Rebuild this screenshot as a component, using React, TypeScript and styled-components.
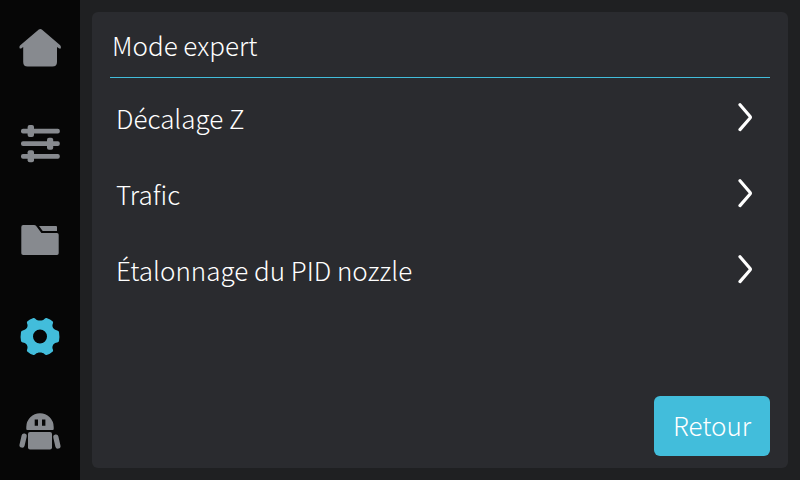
import React from "react";
import styled, { createGlobalStyle } from "styled-components";

const GlobalStyle = createGlobalStyle`
  *, *::before, *::after { box-sizing: border-box; }
  body {
    margin: 0;
    background: #1f2022;
    color: #ffffff;
    font-family: "Noto Sans CJK SC", "Noto Sans", sans-serif;
    font-weight: 300;
  }
  button { font: inherit; color: inherit; border: 0; cursor: pointer; }
`;

const Screen = styled.div`
  display: flex;
  min-height: 100vh;
`;

const Sidebar = styled.nav`
  display: grid;
  grid-auto-rows: 1fr;
  flex: 0 0 80px;
  background: #060606;
`;

const NavButton = styled.button<{ $active?: boolean }>`
  display: grid;
  place-items: center;
  padding: 0;
  background: transparent;
  color: ${(p) => (p.$active ? "#42bddb" : "#878a8f")};
`;

const Main = styled.main`
  display: flex;
  flex: 1;
  padding: 12px;
`;

const Panel = styled.section`
  display: flex;
  flex: 1;
  flex-direction: column;
  padding: 12px 18px;
  border-radius: 6px;
  background: #2a2b2f;
`;

const Title = styled.h1`
  margin: 0;
  padding: 1px 2px 12px;
  border-bottom: 1px solid #42bddb;
  font-size: 26px;
  font-weight: inherit;
  line-height: 40px;
`;

const Menu = styled.ul`
  flex: 1;
  margin: 0;
  padding: 1px 0 0;
  list-style: none;
`;

const MenuRow = styled.button`
  display: flex;
  align-items: center;
  justify-content: space-between;
  width: 100%;
  height: 76px;
  padding: 0 16px 0 6px;
  background: transparent;
  font-size: 26px;
  text-align: left;
`;

const Footer = styled.footer`
  display: flex;
  justify-content: flex-end;
`;

const BackButton = styled.button`
  min-width: 116px;
  height: 60px;
  padding: 0 16px 4px;
  border-radius: 6px;
  background: #42bddb;
  font-size: 26px;
`;

const Icon = ({ children }: { children: React.ReactNode }) => (
  <svg width="48" height="48" viewBox="0 0 48 48" fill="currentColor" aria-hidden="true">
    {children}
  </svg>
);

const HomeIcon = () => (
  <Icon>
    <path d="M22.8 5.6Q24.3 4.4 25.8 5.6L44.2 21.2Q45.3 22.4 44.8 24.4H43.2L41 23V38Q41 42.6 36.4 42.6H11.6Q7.2 42.6 7.2 38V23L5.2 24.6H3.8Q2.8 22.6 4 21.4Z" />
  </Icon>
);

const SlidersIcon = () => (
  <Icon>
    <rect x="5" y="8.8" width="38.8" height="4.8" rx="2" />
    <rect x="5" y="21.3" width="38.8" height="4.8" rx="2" />
    <rect x="5" y="33.9" width="38.8" height="4.8" rx="2" />
    <rect x="11.6" y="5.1" width="6.4" height="12" rx="2" />
    <rect x="31" y="17.7" width="6.2" height="12" rx="2" />
    <rect x="11.6" y="30.3" width="6.4" height="12" rx="2" />
  </Icon>
);

const FolderIcon = () => (
  <Icon>
    <path d="M7.2 9H18Q19.4 9 20.4 10.2L25.4 17H41Q42.7 17 42.7 18.8V37.2Q42.7 39 41 39H7.2Q5.3 39 5.3 37.2V11Q5.3 9 7.2 9Z" />
    <path d="M23 10H40Q41 10 41 11V15H26.7Z" />
  </Icon>
);

const GearIcon = () => (
  <Icon>
    <path
      fillRule="evenodd"
      d="M17.4 6Q18.6 5.8 19.6 7C21.4 9 26.6 9 28.4 7Q29.4 5.8 30.6 6Q34.4 7.4 36.8 9.6Q37.4 10.4 36.9 11.6C35.4 14.6 37.6 18.2 41.2 18.4Q42.7 18.6 43 20Q43.8 24.5 43 29Q42.7 30.4 41.2 30.6C37.6 30.8 35.4 34.4 36.9 37.4Q37.4 38.6 36.8 39.4Q34.4 41.6 30.6 43Q29.4 43.2 28.4 42C26.6 40 21.4 40 19.6 42Q18.6 43.2 17.4 43Q13.6 41.6 11.2 39.4Q10.6 38.6 11.1 37.4C12.6 34.4 10.4 30.8 6.8 30.6Q5.3 30.4 5 29Q4.2 24.5 5 20Q5.3 18.6 6.8 18.4C10.4 18.2 12.6 14.6 11.1 11.6Q10.6 10.4 11.2 9.6Q13.6 7.4 17.4 6ZM24 17.5a7 7 0 1 0 0 14a7 7 0 1 0 0 -14Z"
    />
  </Icon>
);

const RobotIcon = () => (
  <Icon>
    <path
      fillRule="evenodd"
      d="M10.3 21V19A13.7 13.8 0 0 1 37.7 19V21Q37.7 22 36.7 22H11.3Q10.3 22 10.3 21ZM18.7 11.6V17.8H22V11.6ZM26 11.6V17.8H29.4V11.6Z"
    />
    <rect x="12" y="24" width="24" height="17.4" rx="2" />
    <rect x="4.5" y="25.4" width="5.2" height="14.4" rx="2.6" transform="rotate(13 7.1 32.6)" />
    <rect x="38.3" y="26.4" width="5.2" height="14.4" rx="2.6" transform="rotate(-13 40.9 33.6)" />
  </Icon>
);

const ChevronIcon = () => (
  <svg width="16" height="30" viewBox="0 0 16 30" fill="none" stroke="currentColor" strokeWidth="3.2" strokeLinecap="round" strokeLinejoin="round" aria-hidden="true">
    <path d="M2 2.8L11.9 14.2Q12.8 15.2 11.9 16.2L2 27.6" />
  </svg>
);

const navItems = [
  { label: "Accueil", Glyph: HomeIcon },
  { label: "Réglages", Glyph: SlidersIcon },
  { label: "Fichiers", Glyph: FolderIcon },
  { label: "Paramètres", Glyph: GearIcon, active: true },
  { label: "Assistant", Glyph: RobotIcon },
];

const menuItems = ["Décalage Z", "Trafic", "Étalonnage du PID nozzle"];

export default function App() {
  return (
    <>
      <GlobalStyle />
      <Screen>
        <Sidebar>
          {navItems.map(({ label, Glyph, active }) => (
            <NavButton key={label} type="button" aria-label={label} aria-current={active ? "page" : undefined} $active={active}>
              <Glyph />
            </NavButton>
          ))}
        </Sidebar>
        <Main>
          <Panel>
            <Title>Mode expert</Title>
            <Menu>
              {menuItems.map((item) => (
                <li key={item}>
                  <MenuRow type="button">
                    {item}
                    <ChevronIcon />
                  </MenuRow>
                </li>
              ))}
            </Menu>
            <Footer>
              <BackButton type="button">Retour</BackButton>
            </Footer>
          </Panel>
        </Main>
      </Screen>
    </>
  );
}
